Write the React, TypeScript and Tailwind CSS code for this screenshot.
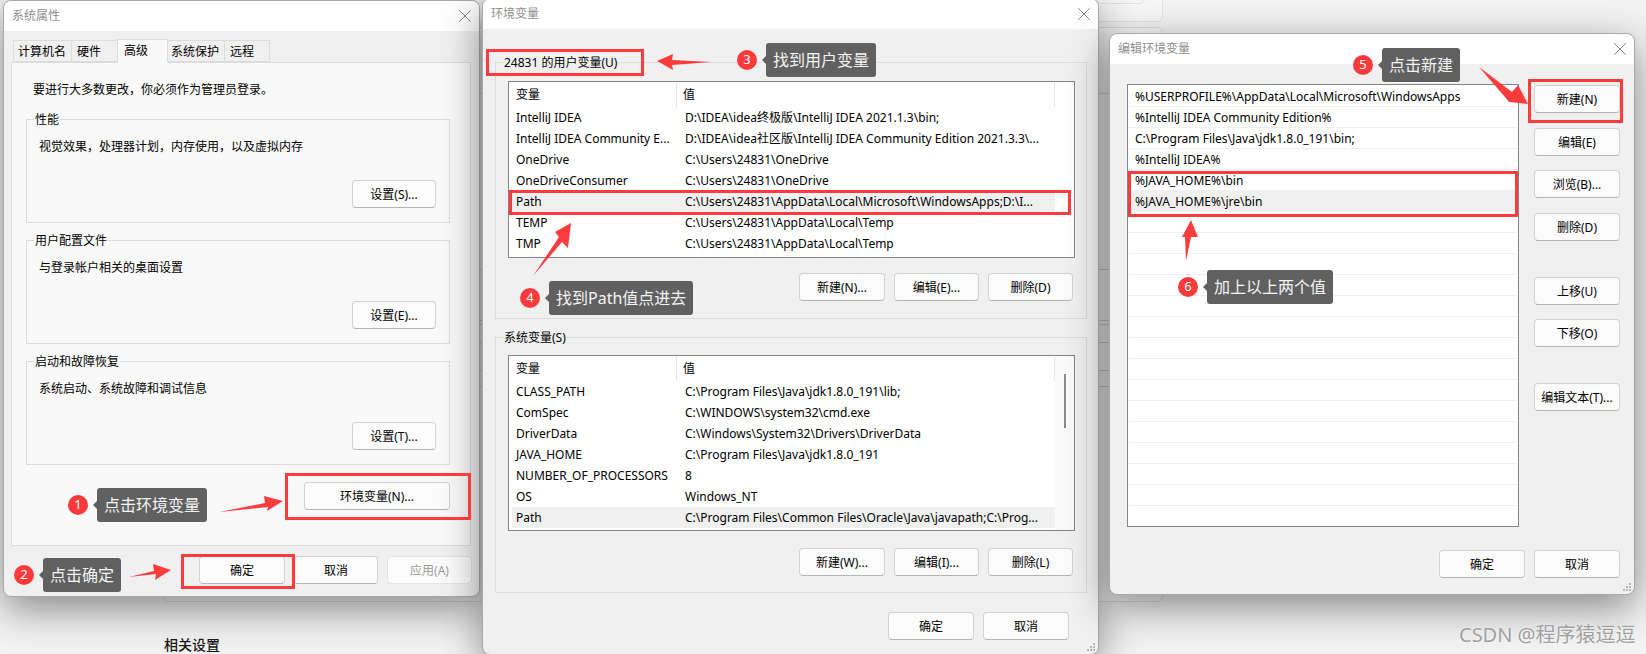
import type { ReactNode } from 'react';
import { X } from 'lucide-react';

function Btn({ className, disabled, children }: { className?: string; disabled?: boolean; children: ReactNode }) {
  return (
    <button
      className={
        'flex h-[28px] shrink-0 items-center justify-center rounded-[4px] border border-[#d2d2d2] border-b-[#b4b4b4] bg-[#fbfbfb] pt-[2px] text-[12px] ' +
        (disabled ? 'border-[#e4e4e4] border-b-[#e4e4e4] bg-[#f5f5f5] text-[#9b9b9b] ' : 'text-black ') +
        (className ?? '')
      }
    >
      {children}
    </button>
  );
}

function TitleBar({ title }: { title: string }) {
  return (
    <div className="flex h-[30px] shrink-0 items-center justify-between rounded-t-[8px] bg-white pl-[8px] pr-[3px]">
      <span className="text-[12px] text-[#8f8f8f]">{title}</span>
      <X size={22} strokeWidth={1} className="text-[#7a7a7a]" />
    </div>
  );
}

function Group({ label, className, children }: { label: string; className?: string; children: ReactNode }) {
  return (
    <div className={'relative border border-[#dcdcdc] ' + (className ?? '')}>
      <span className="absolute -top-[9px] left-[7px] bg-inherit px-[1px] text-[12px] leading-[18px] text-black">{label}</span>
      {children}
    </div>
  );
}

function PerfGroup({ label, desc, btn, className }: { label: string; desc: string; btn: string; className?: string }) {
  return (
    <Group label={label} className={'flex h-[104px] flex-col justify-between bg-[#f9f9f9] pb-[14px] pl-[12px] pr-[13px] pt-[18px] ' + (className ?? '')}>
      <div className="text-[12px] leading-[18px] text-black">{desc}</div>
      <Btn className="w-[84px] self-end">{btn}</Btn>
    </Group>
  );
}

const TABS = [
  { name: '计算机名', cls: 'w-[59px] h-[22px] pl-[4px] pt-[2px]' },
  { name: '硬件', cls: 'w-[47px] h-[22px] pl-[5px] pt-[2px]' },
  { name: '高级', cls: 'w-[51px] h-[24px] bg-[#f9f9f9] border-b-[#f9f9f9] pl-[6px] -mb-[1px] relative' },
  { name: '系统保护', cls: 'w-[58px] h-[22px] pl-[3px] pt-[2px]' },
  { name: '远程', cls: 'w-[46px] h-[22px] pl-[5px] pt-[2px]' },
];

function SystemProps() {
  return (
    <div className="absolute left-[3px] top-0 flex h-[597px] w-[477px] flex-col rounded-[8px] border border-[#a8a8a8] bg-[#f0f0f0] shadow-[0_12px_40px_rgba(0,0,0,0.45)]">
      <TitleBar title="系统属性" />
      <div className="ml-[8px] mt-[8px] flex items-end pl-[1px]">
        {TABS.map((t) => (
          <div key={t.name} className={'-mr-px flex items-center border border-[#dcdcdc] text-[12px] text-black ' + t.cls}>
            {t.name}
          </div>
        ))}
      </div>
      <div className="ml-[7px] flex h-[484px] w-[460px] flex-col border border-[#dcdcdc] bg-[#f9f9f9] pl-[14px] pr-[20px]">
        <div className="ml-[7px] mt-[18px] mb-[20px] text-[12px] leading-[18px] text-black">要进行大多数更改，你必须作为管理员登录。</div>
        <PerfGroup label="性能" desc="视觉效果，处理器计划，内存使用，以及虚拟内存" btn="设置(S)..." />
        <PerfGroup className="mt-[17px]" label="用户配置文件" desc="与登录帐户相关的桌面设置" btn="设置(E)..." />
        <PerfGroup className="mt-[17px]" label="启动和故障恢复" desc="系统启动、系统故障和调试信息" btn="设置(T)..." />
        <Btn className="mt-[17px] w-[146px] self-end">环境变量(N)...</Btn>
      </div>
      <div className="mt-[10px] flex justify-end gap-[9px] pr-[7px]">
        <Btn className="w-[86px]">确定</Btn>
        <Btn className="w-[84px]">取消</Btn>
        <Btn disabled className="w-[85px]">应用(A)</Btn>
      </div>
    </div>
  );
}

type Row = [string, string];

const USER_VARS: Row[] = [
  ['IntelliJ IDEA', 'D:\\IDEA\\idea终极版\\IntelliJ IDEA 2021.1.3\\bin;'],
  ['IntelliJ IDEA Community E...', 'D:\\IDEA\\idea社区版\\IntelliJ IDEA Community Edition 2021.3.3\\...'],
  ['OneDrive', 'C:\\Users\\24831\\OneDrive'],
  ['OneDriveConsumer', 'C:\\Users\\24831\\OneDrive'],
  ['Path', 'C:\\Users\\24831\\AppData\\Local\\Microsoft\\WindowsApps;D:\\I...'],
  ['TEMP', 'C:\\Users\\24831\\AppData\\Local\\Temp'],
  ['TMP', 'C:\\Users\\24831\\AppData\\Local\\Temp'],
];

const SYSTEM_VARS: Row[] = [
  ['CLASS_PATH', 'C:\\Program Files\\Java\\jdk1.8.0_191\\lib;'],
  ['ComSpec', 'C:\\WINDOWS\\system32\\cmd.exe'],
  ['DriverData', 'C:\\Windows\\System32\\Drivers\\DriverData'],
  ['JAVA_HOME', 'C:\\Program Files\\Java\\jdk1.8.0_191'],
  ['NUMBER_OF_PROCESSORS', '8'],
  ['OS', 'Windows_NT'],
  ['Path', 'C:\\Program Files\\Common Files\\Oracle\\Java\\javapath;C:\\Prog...'],
];

function VarList({ rows, highlight, scroll, className }: { rows: Row[]; highlight: number; scroll?: boolean; className?: string }) {
  return (
    <div className={'flex w-[567px] border border-[#85858f] bg-white ' + (className ?? '')}>
      <div className="w-[546px]">
        <div className="flex h-[25px] items-center text-[12px] text-black">
          <div className="flex h-[24px] w-[168px] items-center border-r border-[#e5e5e5] pl-[7px]">变量</div>
          <div className="flex h-[24px] w-[378px] items-center border-r border-[#e5e5e5] pl-[6px]">值</div>
        </div>
        {rows.map((r, i) => (
          <div key={r[0]} className={'ml-[3px] flex h-[21px] items-center pl-[4px] pt-[1px] text-[12px] text-black ' + (i === highlight ? 'bg-[#f0f0f0]' : '')}>
            <div className="w-[165px] shrink-0 whitespace-nowrap">{r[0]}</div>
            <div className="whitespace-nowrap pl-[4px]">{r[1]}</div>
          </div>
        ))}
      </div>
      {scroll && (
        <div className="flex-1 bg-[#fafafa] pl-[9px] pt-[18px]">
          <div className="h-[54px] w-[2px] bg-[#8a8a8a]" />
        </div>
      )}
    </div>
  );
}

function Grip() {
  return (
    <svg className="absolute bottom-[2px] right-[2px]" width="10" height="10" viewBox="0 0 10 10" fill="#b5b5b5">
      <rect x="7" y="1" width="2" height="2" />
      <rect x="4" y="4" width="2" height="2" />
      <rect x="7" y="4" width="2" height="2" />
      <rect x="1" y="7" width="2" height="2" />
      <rect x="4" y="7" width="2" height="2" />
      <rect x="7" y="7" width="2" height="2" />
    </svg>
  );
}

function EnvVars() {
  return (
    <div className="absolute left-[482px] -top-[2px] flex h-[657px] w-[617px] flex-col rounded-[8px] border border-[#a8a8a8] bg-[#f0f0f0] shadow-[0_12px_40px_rgba(0,0,0,0.45)]">
      <TitleBar title="环境变量" />
      <Group label="24831 的用户变量(U)" className="ml-[12px] mt-[33px] flex h-[257px] w-[592px] flex-col bg-[#f0f0f0] pl-[12px] pt-[18px]">
        <VarList rows={USER_VARS} highlight={4} className="h-[177px]" />
        <div className="mt-[15px] flex gap-[9px] pl-[291px]">
          <Btn className="w-[86px]">新建(N)...</Btn>
          <Btn className="w-[85px]">编辑(E)...</Btn>
          <Btn className="w-[85px]">删除(D)</Btn>
        </div>
      </Group>
      <Group label="系统变量(S)" className="ml-[12px] mt-[18px] flex h-[256px] w-[592px] flex-col bg-[#f0f0f0] pl-[12px] pt-[17px]">
        <VarList rows={SYSTEM_VARS} highlight={6} scroll className="h-[176px]" />
        <div className="mt-[17px] flex gap-[9px] pl-[291px]">
          <Btn className="w-[86px]">新建(W)...</Btn>
          <Btn className="w-[85px]">编辑(I)...</Btn>
          <Btn className="w-[85px]">删除(L)</Btn>
        </div>
      </Group>
      <div className="mt-[19px] flex justify-end gap-[9px] pr-[29px]">
        <Btn className="w-[86px]">确定</Btn>
        <Btn className="w-[86px]">取消</Btn>
      </div>
      <Grip />
    </div>
  );
}

const PATH_VALUES = [
  '%USERPROFILE%\\AppData\\Local\\Microsoft\\WindowsApps',
  '%IntelliJ IDEA Community Edition%',
  'C:\\Program Files\\Java\\jdk1.8.0_191\\bin;',
  '%IntelliJ IDEA%',
  '%JAVA_HOME%\\bin',
  '%JAVA_HOME%\\jre\\bin',
  ...Array.from({ length: 15 }, () => ''),
];

function EditEnv() {
  return (
    <div className="absolute left-[1109px] top-[33px] flex h-[562px] w-[526px] flex-col rounded-[8px] border border-[#a8a8a8] bg-[#f0f0f0] shadow-[0_12px_40px_rgba(0,0,0,0.45)]">
      <TitleBar title="编辑环境变量" />
      <div className="flex pl-[17px] pt-[20px]">
        <div className="h-[443px] w-[392px] border border-[#85858f] bg-white pt-[1px]">
          {PATH_VALUES.map((v, i) => (
            <div
              key={i}
              className={
                'mx-[1px] flex h-[21px] items-center border-b pl-[6px] pt-[1px] text-[12px] text-black ' +
                (i === 5 ? 'border-[#f0f0f0] bg-[#f0f0f0]' : i === 20 ? 'border-transparent' : 'border-[#efefef]')
              }
            >
              {v}
            </div>
          ))}
        </div>
        <div className="ml-[15px] flex w-[86px] flex-col pt-[1px]">
          <Btn className="mb-[15px]">新建(N)</Btn>
          <Btn className="mb-[14px]">编辑(E)</Btn>
          <Btn className="mb-[15px]">浏览(B)...</Btn>
          <Btn className="mb-[36px]">删除(D)</Btn>
          <Btn className="mb-[14px]">上移(U)</Btn>
          <Btn className="mb-[36px]">下移(O)</Btn>
          <Btn>编辑文本(T)...</Btn>
        </div>
      </div>
      <div className="mt-[23px] flex justify-end gap-[9px] pr-[14px]">
        <Btn className="w-[86px]">确定</Btn>
        <Btn className="w-[86px]">取消</Btn>
      </div>
      <Grip />
    </div>
  );
}

function Callout({ n, text, className }: { n: number; text: string; className: string }) {
  return (
    <div className={'absolute flex h-[34px] items-center ' + className}>
      <span className="flex h-[20px] w-[20px] items-center justify-center rounded-full bg-[#fb3b3b] text-[13px] text-white">{n}</span>
      <span className="relative ml-[9px] flex h-[34px] items-center whitespace-nowrap rounded-[3px] bg-[#606060] px-[7px] text-[16px] text-[#f4f4f4]">
        <span className="absolute -left-[4px] top-[13px] h-0 w-0 border-y-[4px] border-r-[4px] border-y-transparent border-r-[#606060]" />
        {text}
      </span>
    </div>
  );
}

// page background: the settings window sitting behind the dialogs
function Backdrop() {
  return (
    <>
      <div className="absolute left-[163px] -top-[20px] h-[42px] w-[1000px] rounded-[6px] border border-[#e2e2e2] bg-[#f7f7f7]" />
      <div className="absolute left-[163px] -top-[20px] h-[24px] w-[982px] rounded-[6px] border border-[#e2e2e2] bg-[#f7f7f7]" />
      <div className="absolute left-[163px] top-[27px] flex h-[575px] w-[1000px] flex-col rounded-[6px] border border-[#dcdcdc] bg-[#f7f7f7]">
        <div className="h-[66px] border-b border-[#d8d8d8]" />
        <div className="h-[176px] border-b border-[#d0d0d0]" />
        <div className="h-[51px] border-b border-[#d0d0d0]" />
        <div className="h-[4px] border-b border-[#d0d0d0]" />
        <div className="h-[18px] border-b border-[#d0d0d0]" />
        <div className="h-[28px] border-b border-[#d0d0d0]" />
        <div className="h-[16px] border-b border-[#d0d0d0]" />
      </div>
      <div className="absolute left-[164px] top-[636px] text-[14px] font-medium leading-[18px] text-[#1a1a1a]">相关设置</div>
    </>
  );
}

export default function App() {
  return (
    <div className="relative h-[654px] w-[1646px] overflow-hidden bg-[#f3f3f3] font-['Noto_Sans','Noto_Sans_CJK_SC',sans-serif]">
      <Backdrop />
      <SystemProps />
      <EnvVars />
      <EditEnv />

      {/* red highlight boxes */}
      <div className="absolute left-[285px] top-[473px] h-[47px] w-[186px] border-[3px] border-[#fc3c3c]" />
      <div className="absolute left-[181px] top-[554px] h-[35px] w-[114px] border-[3px] border-[#fc3c3c]" />
      <div className="absolute left-[486px] top-[49px] h-[27px] w-[158px] border-[3px] border-[#fc3c3c]" />
      <div className="absolute left-[509px] top-[190px] h-[25px] w-[562px] border-[3px] border-[#fc3c3c]" />
      <div className="absolute left-[1528px] top-[79px] h-[44px] w-[95px] border-[3px] border-[#fc3c3c]" />
      <div className="absolute left-[1128px] top-[171px] h-[46px] w-[390px] border-[3px] border-[#fc3c3c]" />

      {/* arrows */}
      <svg className="absolute left-0 top-0" width="1646" height="654" fill="#fc3c3c">
        <polygon points="219,512 265,503 264,496 283,501 267,511 268,507" />
        <polygon points="129,577 154,571 153,564 171,570 155,580 156,574" />
        <polygon points="657,61 673,54 672,60 711,62 672,65 673,70" />
        <polygon points="533,276 559,237 555,232 571,223 568,248 562,242" />
        <polygon points="1479,67 1512,92 1518,85 1528,104 1509,102 1505,97" />
        <polygon points="1191,220 1198,237 1191,237 1186,261 1185,237 1182,237" />
      </svg>

      <Callout n={1} text="点击环境变量" className="left-[68px] top-[488px]" />
      <Callout n={2} text="点击确定" className="left-[14px] top-[558px]" />
      <Callout n={3} text="找到用户变量" className="left-[737px] top-[43px]" />
      <Callout n={4} text="找到Path值点进去" className="left-[520px] top-[281px]" />
      <Callout n={5} text="点击新建" className="left-[1353px] top-[48px]" />
      <Callout n={6} text="加上以上两个值" className="left-[1178px] top-[270px]" />

      <div className="absolute left-[1459px] top-[622px] whitespace-nowrap text-[20px] leading-[26px] text-[#a0a0a0] [text-shadow:0_0_2px_#ffffff]">
        CSDN @程序猿逗逗
      </div>
    </div>
  );
}
